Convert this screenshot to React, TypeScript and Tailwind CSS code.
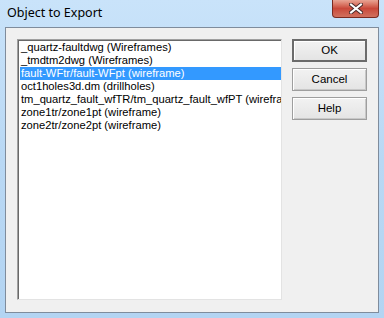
import React from 'react'

const items = [
  '_quartz-faultdwg (Wireframes)',
  '_tmdtm2dwg (Wireframes)',
  'fault-WFtr/fault-WFpt (wireframe)',
  'oct1holes3d.dm (drillholes)',
  'tm_quartz_fault_wfTR/tm_quartz_fault_wfPT (wireframe)',
  'zone1tr/zone1pt (wireframe)',
  'zone2tr/zone2pt (wireframe)',
]

const font = { fontFamily: '"Liberation Sans", Arial, sans-serif' }

function Button({ label, isDefault }: { label: string; isDefault?: boolean }) {
  return (
    <button
      className={`h-[23px] w-[75px] text-[11.5px] text-black bg-gradient-to-b from-[#f2f2f2] to-[#e4e4e4] ${
        isDefault
          ? 'border-2 border-[#6b6b6b] shadow-[inset_1px_1px_0_#ffffff]'
          : 'border border-[#9e9e9e] shadow-[inset_1px_1px_0_#ffffff,inset_-1px_-1px_0_#c8c8c8]'
      }`}
      style={font}
    >
      {label}
    </button>
  )
}

export default function App() {
  return (
    <div className="w-[384px] h-[318px] flex flex-col bg-gradient-to-b from-[#c9e3fa] via-[#b9d8f4] to-[#b3d4f2] overflow-hidden">
      {/* title bar */}
      <div className="h-[27px] flex items-start justify-between shrink-0">
        <span
          className="pl-[7px] pt-[4px] text-[12.5px] text-black"
          style={{ fontFamily: '"Noto Sans", "Open Sans", sans-serif' }}
        >
          Object to Export
        </span>
        <div className="mr-[5px] w-[47px] h-[18px] rounded-b-[4px] border border-t-0 border-[#7a2a20] bg-gradient-to-b from-[#e8a494] via-[#c9483a] to-[#d0705e] flex items-center justify-center">
          <svg width="14" height="11" viewBox="0 0 14 11">
            <path
              d="M2 1.5 L12 9.5 M12 1.5 L2 9.5"
              stroke="#4a2a2a"
              strokeWidth="4"
              strokeLinecap="square"
            />
            <path
              d="M2 1.5 L12 9.5 M12 1.5 L2 9.5"
              stroke="#ffffff"
              strokeWidth="2"
              strokeLinecap="square"
            />
          </svg>
        </div>
      </div>

      {/* client area */}
      <div className="mx-[5px] h-[286px] border border-[#7f8c9c] bg-[#f0f0f0] flex gap-[10px] p-[11px] pr-[10px]">
        <div className="w-[265px] h-[261px] bg-white border border-t-[#a0a0a0] border-l-[#a0a0a0] border-r-[#e3e3e3] border-b-[#e3e3e3] shadow-[inset_1px_1px_0_#696969] overflow-hidden pl-[2px] pt-[1px]">
          {items.map((t, i) => (
            <div
              key={t}
              className={`h-[13px] leading-[13px] text-[11.2px] whitespace-nowrap pl-[1px] ${
                i === 2 ? 'bg-[#3399ff] text-white' : 'text-black'
              }`}
              style={font}
            >
              {t}
            </div>
          ))}
        </div>
        <div className="flex flex-col gap-[6px]">
          <Button label="OK" isDefault />
          <Button label="Cancel" />
          <Button label="Help" />
        </div>
      </div>
    </div>
  )
}
